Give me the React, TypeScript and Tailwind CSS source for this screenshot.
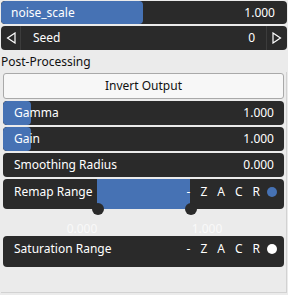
import React from "react";

const BLUE = "bg-[#4672b4]";

function SliderRow({ label, value, fill }: { label: string; value: string; fill: number }) {
  return (
    <div className="relative h-[24px] rounded-[4px] bg-[#2a2a2a] overflow-hidden">
      {fill > 0 && (
        <div className={`absolute left-0 top-0 bottom-0 rounded-[4px] ${BLUE}`} style={{ width: fill }} />
      )}
      <div className="relative flex h-full items-center justify-between pl-[11px] pr-[10px] text-white">
        <span>{label}</span>
        <span>{value}</span>
      </div>
    </div>
  );
}

function Flags({ dot }: { dot: string }) {
  return (
    <div className="flex items-center gap-[10px] text-white">
      <span>-</span>
      <span>Z</span>
      <span>A</span>
      <span>C</span>
      <span>R</span>
      <span className={`-ml-[3px] h-[10px] w-[10px] rounded-full ${dot}`} />
    </div>
  );
}

function Tri({ dir }: { dir: "l" | "r" }) {
  return (
    <svg width="10" height="12" viewBox="0 0 10 12" fill="none" stroke="white" strokeWidth="1.2">
      {dir === "l" ? <path d="M9 1 L1.5 6 L9 11 Z" /> : <path d="M1 1 L8.5 6 L1 11 Z" />}
    </svg>
  );
}

export default function App() {
  return (
    <div
      className="h-[295px] w-[288px] overflow-hidden bg-[#ebebeb] text-[12px] leading-none"
      style={{ fontFamily: '"Noto Sans", "Open Sans", sans-serif' }}
    >
      <div className="px-[1px] pt-[1px]">
        <div className="relative h-[23px] rounded-[4px] bg-[#2a2a2a] overflow-hidden">
          <div className={`absolute left-0 top-0 bottom-0 w-[142px] rounded-[4px] ${BLUE}`} />
          <div className="relative flex h-full items-center justify-between pl-[10px] pr-[12px] text-white">
            <span>noise_scale</span>
            <span>1.000</span>
          </div>
        </div>
        <div className="mt-[2px] flex h-[24px] rounded-[4px] bg-[#2a2a2a] text-white">
          <div className="flex w-[20px] items-center justify-center border-r border-[#3c3c3c]">
            <Tri dir="l" />
          </div>
          <div className="flex flex-1 items-center justify-between pl-[12px] pr-[11px]">
            <span>Seed</span>
            <span>0</span>
          </div>
          <div className="flex w-[21px] items-center justify-center border-l border-[#3c3c3c]">
            <Tri dir="r" />
          </div>
        </div>
      </div>
      <div className="flex h-[22px] items-center pl-[1px] pt-[2px] text-[#111]">Post-Processing</div>
      <div className="mx-[1px] h-[221px] border-r border-b border-[#d2d2d2] px-[2px] pt-[1px]">
        <button className="flex h-[26px] w-full items-center justify-center rounded-[3px] border border-[#a9a9a9] bg-[#f7f7f7] text-[#111]">
          Invert Output
        </button>
        <div className="mt-[2px] flex flex-col gap-[2px]">
          <SliderRow label="Gamma" value="1.000" fill={28} />
          <SliderRow label="Gain" value="1.000" fill={28} />
          <SliderRow label="Smoothing Radius" value="0.000" fill={0} />
        </div>
        <div className="relative mt-[2px] h-[30px] rounded-[4px] bg-[#2a2a2a]">
          <div className={`absolute left-[94px] top-0 bottom-0 w-[93px] ${BLUE}`} />
          <div className="absolute left-[89px] top-[24px] h-[12px] w-[12px] rounded-full bg-[#2a2a2a]" />
          <div className="absolute left-[182px] top-[24px] h-[12px] w-[12px] rounded-full bg-[#2a2a2a]" />
          <div className="relative flex h-full items-center justify-between pb-[5px] pl-[11px] pr-[7px] text-white">
            <span>Remap Range</span>
            <Flags dot="bg-[#4672b4]" />
          </div>
        </div>
        <div className="flex h-[27px] items-end pb-[1px] text-[#f9f9f9]">
          <span className="w-[158px] text-center">0.000</span>
          <span className="w-[92px] text-center">1.000</span>
        </div>
        <div className="h-[31px] rounded-[4px] bg-[#2a2a2a]">
          <div className="flex h-full items-center justify-between pb-[5px] pl-[11px] pr-[7px] text-white">
            <span>Saturation Range</span>
            <Flags dot="bg-white" />
          </div>
        </div>
      </div>
    </div>
  );
}
